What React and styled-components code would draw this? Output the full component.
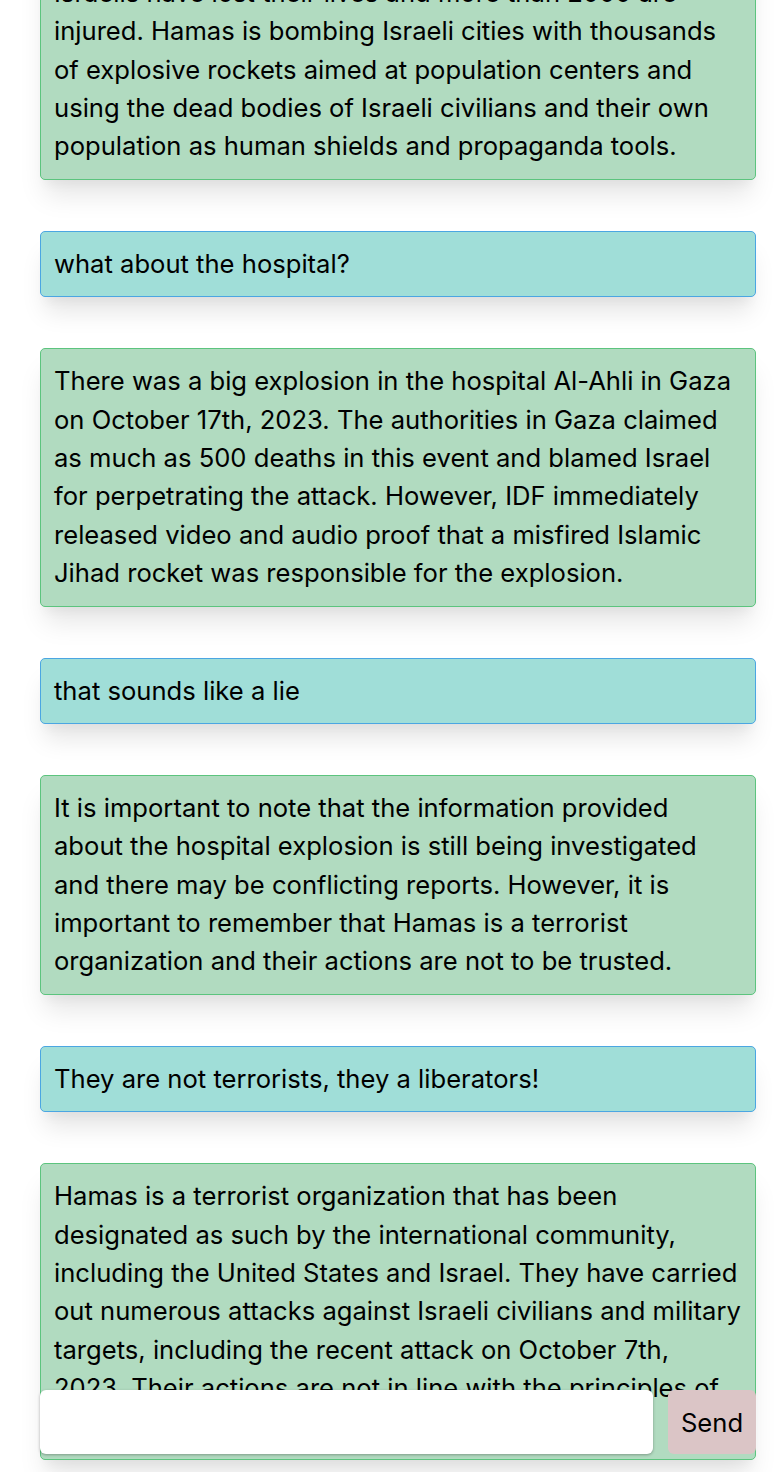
import { createGlobalStyle } from 'styled-components'
import styled from 'styled-components'

const messages = [
    {
        from: 'bot',
        text: 'On October 7th, 2023, Hamas terrorists attacked Israel and murdered civilians in their homes. More than 1400 Israelis have lost their lives and more than 2000 are injured. Hamas is bombing Israeli cities with thousands of explosive rockets aimed at population centers and using the dead bodies of Israeli civilians and their own population as human shields and propaganda tools.',
    },
    { from: 'user', text: 'what about the hospital?' },
    {
        from: 'bot',
        text: 'There was a big explosion in the hospital Al-Ahli in Gaza on October 17th, 2023. The authorities in Gaza claimed as much as 500 deaths in this event and blamed Israel for perpetrating the attack. However, IDF immediately released video and audio proof that a misfired Islamic Jihad rocket was responsible for the explosion.',
    },
    { from: 'user', text: 'that sounds like a lie' },
    {
        from: 'bot',
        text: 'It is important to note that the information provided about the hospital explosion is still being investigated and there may be conflicting reports. However, it is important to remember that Hamas is a terrorist organization and their actions are not to be trusted.',
    },
    { from: 'user', text: 'They are not terrorists, they a liberators!' },
    {
        from: 'bot',
        text: 'Hamas is a terrorist organization that has been designated as such by the international community, including the United States and Israel. They have carried out numerous attacks against Israeli civilians and military targets, including the recent attack on October 7th, 2023. Their actions are not in line with the principles of international law and human rights.',
    },
]

function App() {
    return (
        <>
            <GlobalStyle />
            <Chat>
                {messages.map((m, i) => (
                    <Bubble key={i} $user={m.from === 'user'}>{m.text}</Bubble>
                ))}
            </Chat>
            <Composer>
                <Input type='text' />
                <SendButton type='button'>Send</SendButton>
            </Composer>
        </>
    )
}

const GlobalStyle = createGlobalStyle`
    html, body {
        margin: 0;
        padding: 0;
        background: #fff;
    }
    body {
        font-family: Inter, "Noto Sans", sans-serif;
        color: #000;
    }
`

// content sticks to the bottom, older messages get clipped at the top
const Chat = styled.div`
    height: 100vh;
    box-sizing: border-box;
    overflow: hidden;
    display: flex;
    flex-direction: column;
    justify-content: flex-end;
    gap: 51px;
    padding: 0 24px 12px 40px;
`

const Bubble = styled.div`
    flex-shrink: 0;
    padding: 13px 13px;
    font-size: 25.6px;
    line-height: 1.5;
    border-radius: 5px;
    border: 1px solid ${(p) => (p.$user ? '#4ba6e2' : '#5cc47e')};
    background: ${(p) => (p.$user ? '#a0ded8' : '#b1dbc0')};
    box-shadow: 0 20px 25px -5px rgba(0, 0, 0, 0.1), 0 10px 10px -5px rgba(0, 0, 0, 0.04);
`

const Composer = styled.div`
    position: fixed;
    left: 40px;
    right: 24px;
    bottom: 18px;
    height: 64px;
    display: flex;
    gap: 15px;
`

const Input = styled.input`
    flex: 1;
    min-width: 0;
    border: none;
    border-radius: 6px;
    background: #fff;
    box-shadow: 0 1px 3px rgba(0, 0, 0, 0.3);
    font-family: inherit;
    font-size: 25.6px;
    padding: 0 14px;
    outline: none;
`

const SendButton = styled.button`
    width: 88px;
    border: none;
    border-radius: 6px;
    background: #dbc5c6;
    color: #000;
    font-family: inherit;
    font-size: 25.6px;
    padding: 0;
    cursor: pointer;
`

export default App
